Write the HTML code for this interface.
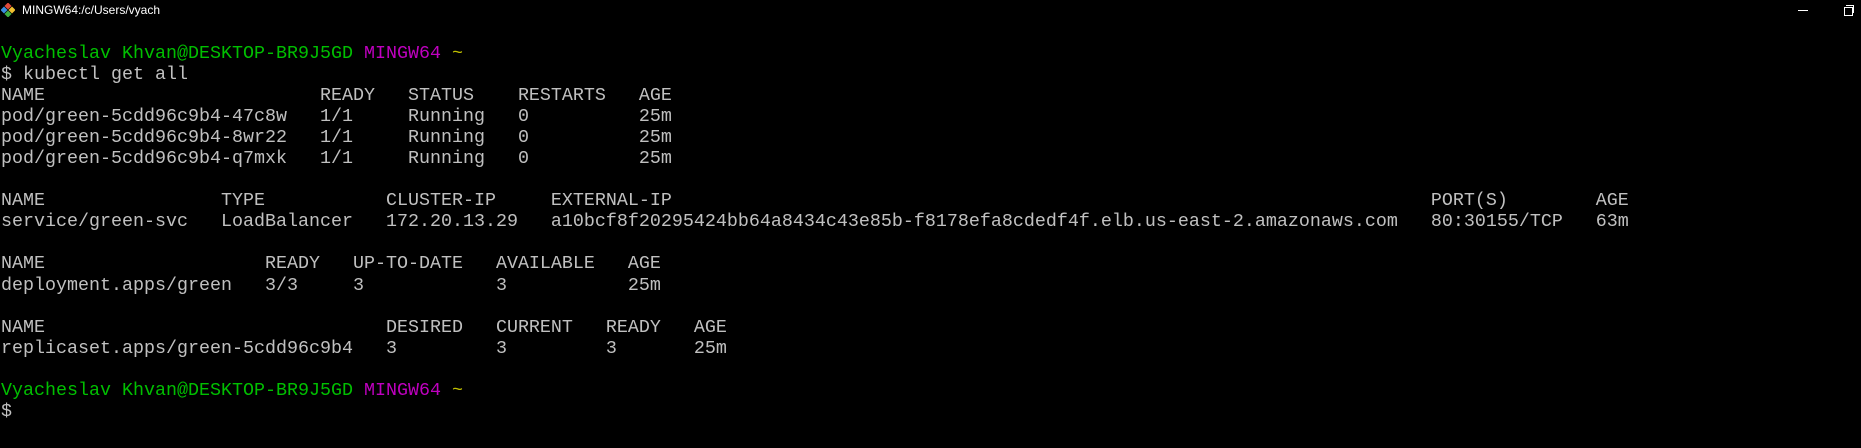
<!DOCTYPE html>
<html><head><meta charset="utf-8"><style>
html,body{margin:0;padding:0;background:#000;}
body{width:1861px;height:448px;position:relative;overflow:hidden;}
.title{position:absolute;left:22px;top:3px;font:12px "Liberation Sans",sans-serif;color:#fff;}
pre{position:absolute;left:1px;top:43px;margin:0;font-family:"Liberation Mono",monospace;font-size:18.33px;line-height:21.05px;color:#c0c0c0;}
.g{color:#00bf00}.m{color:#bf00bf}.y{color:#bfbf00}
</style></head><body>
<svg style="position:absolute;left:1px;top:3px" width="14" height="14" viewBox="0 0 14 14">
<rect x="4.5" y="0.5" width="5" height="5" transform="rotate(45 7 3)" fill="#e04a3a"/>
<rect x="0.5" y="4.5" width="5" height="5" transform="rotate(45 3 7)" fill="#3a8ee0"/>
<rect x="8.5" y="4.5" width="5" height="5" transform="rotate(45 11 7)" fill="#f0c030"/>
<rect x="4.5" y="8.5" width="5" height="5" transform="rotate(45 7 11)" fill="#40b040"/>
</svg>
<div class="title">MINGW64:/c/Users/vyach</div>
<div style="position:absolute;left:1798px;top:10px;width:10px;height:1px;background:#fff"></div>
<div style="position:absolute;left:1844px;top:7px;width:7px;height:7px;border:1px solid #fff"></div>
<div style="position:absolute;left:1846px;top:5px;width:7px;height:7px;border-top:1px solid #fff;border-right:1px solid #fff"></div>
<pre><span class="g">Vyacheslav Khvan@DESKTOP-BR9J5GD</span> <span class="m">MINGW64</span> <span class="y">~</span>
$ kubectl get all
NAME                         READY   STATUS    RESTARTS   AGE
pod/green-5cdd96c9b4-47c8w   1/1     Running   0          25m
pod/green-5cdd96c9b4-8wr22   1/1     Running   0          25m
pod/green-5cdd96c9b4-q7mxk   1/1     Running   0          25m

NAME                TYPE           CLUSTER-IP     EXTERNAL-IP                                                                     PORT(S)        AGE
service/green-svc   LoadBalancer   172.20.13.29   a10bcf8f20295424bb64a8434c43e85b-f8178efa8cdedf4f.elb.us-east-2.amazonaws.com   80:30155/TCP   63m

NAME                    READY   UP-TO-DATE   AVAILABLE   AGE
deployment.apps/green   3/3     3            3           25m

NAME                               DESIRED   CURRENT   READY   AGE
replicaset.apps/green-5cdd96c9b4   3         3         3       25m

<span class="g">Vyacheslav Khvan@DESKTOP-BR9J5GD</span> <span class="m">MINGW64</span> <span class="y">~</span>
$
</pre>
</body></html>
